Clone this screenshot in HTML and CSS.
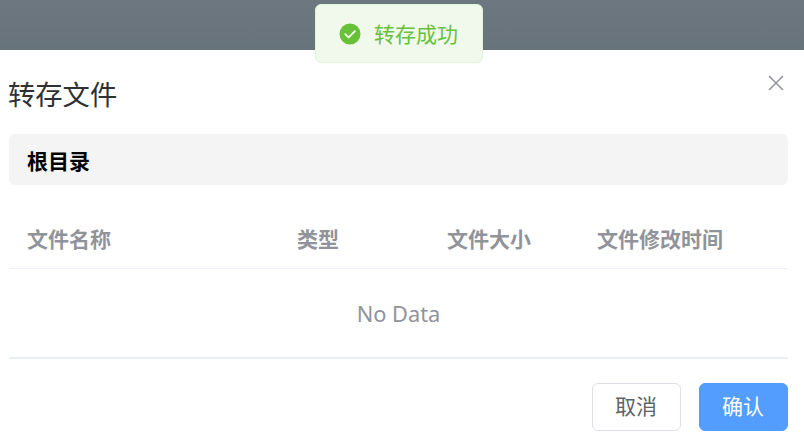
FILE: index.html
```html
<!DOCTYPE html>
<html lang="zh-CN">
<head>
<meta charset="UTF-8">
<title>转存文件</title>
<link rel="stylesheet" href="styles.css">
</head>
<body>
<div class="message" role="alert">
  <svg class="message-icon" viewBox="0 0 22 22"><circle cx="11" cy="11" r="10.5" fill="#67c23a"/><path d="M6.2 11.1l3.4 3.4 6.3-6.3" fill="none" stroke="#fff" stroke-width="1.7" stroke-linecap="round" stroke-linejoin="round"/></svg>
  <span>转存成功</span>
</div>
<main class="dialog">
  <header class="dialog-header">
    <h1>转存文件</h1>
    <button class="close" aria-label="关闭"><svg viewBox="0 0 16 16"><path d="M1 1l14 14M15 1L1 15" fill="none" stroke="#909399" stroke-width="1.5"/></svg></button>
  </header>
  <nav class="path">根目录</nav>
  <section class="table">
    <div class="table-head">
      <span>文件名称</span><span>类型</span><span>文件大小</span><span>文件修改时间</span>
    </div>
    <div class="empty">No Data</div>
  </section>
  <footer class="actions">
    <button class="btn">取消</button>
    <button class="btn primary">确认</button>
  </footer>
</main>
</body>
</html>
```
FILE: styles.css
```css
* { box-sizing: border-box; }
body {
  margin: 0;
  padding-top: 50px;
  height: 435px;
  overflow: hidden;
  background: linear-gradient(#6d7780, #67737b 50px);
  font-family: "Noto Sans", "Noto Sans CJK SC", sans-serif;
  font-size: 21px;
}
button { font: inherit; cursor: pointer; }
.message {
  position: absolute;
  top: 4px;
  left: 315px;
  width: 168px;
  height: 59px;
  display: flex;
  align-items: center;
  gap: 13px;
  padding: 0 0 0 23px;
  border: 1px solid #e1f3d8;
  border-radius: 6px;
  background: #f0f9eb;
  color: #67c23a;
  font-family: "Noto Sans CJK SC", sans-serif;
  line-height: 30px;
}
.message span { margin-top: -2px; }
.message-icon { width: 22px; height: 22px; }
.dialog {
  height: 385px;
  padding: 0 16px 0 9px;
  background: #fff;
}
.dialog-header {
  display: flex;
  justify-content: space-between;
  height: 84px;
}
h1 {
  margin: 23px 0 0 -1px;
  color: #303133;
  font-family: "Noto Sans CJK SC", sans-serif;
  font-size: 27.3px;
  font-weight: 400;
  line-height: 40px;
}
.close {
  width: 16px;
  height: 16px;
  margin: 25px 4px 0 0;
  padding: 0;
  border: 0;
  background: none;
}
.close svg { display: block; }
.path {
  height: 51px;
  padding-left: 18px;
  border-radius: 6px;
  background: #f4f4f4;
  color: #000;
  font-family: "Noto Sans CJK SC", sans-serif;
  font-weight: 700;
  line-height: 52px;
}
.table {
  height: 174px;
  padding-top: 24px;
  border-bottom: 2px solid #ebeef5;
  color: #909399;
}
.table-head {
  display: grid;
  grid-template-columns: 270px 150px 150px 1fr;
  height: 60px;
  padding-left: 18px;
  border-bottom: 1px solid #ebeef5;
  font-family: "Noto Sans CJK SC", sans-serif;
  font-weight: 700;
  line-height: 58px;
}
.empty {
  height: 88px;
  text-align: center;
  font-size: 21.8px;
  line-height: 90px;
}
.actions {
  display: flex;
  justify-content: flex-end;
  gap: 18px;
  padding-top: 24px;
}
.btn {
  width: 89px;
  height: 48px;
  padding: 0 1px 3px 0;
  border: 1px solid #dcdfe6;
  border-radius: 6px;
  background: #fff;
  color: #606266;
  font-family: "Noto Sans CJK SC", sans-serif;
  line-height: 43px;
}
.primary {
  border-color: #539dff;
  background: #539dff;
  color: #fff;
}
```
